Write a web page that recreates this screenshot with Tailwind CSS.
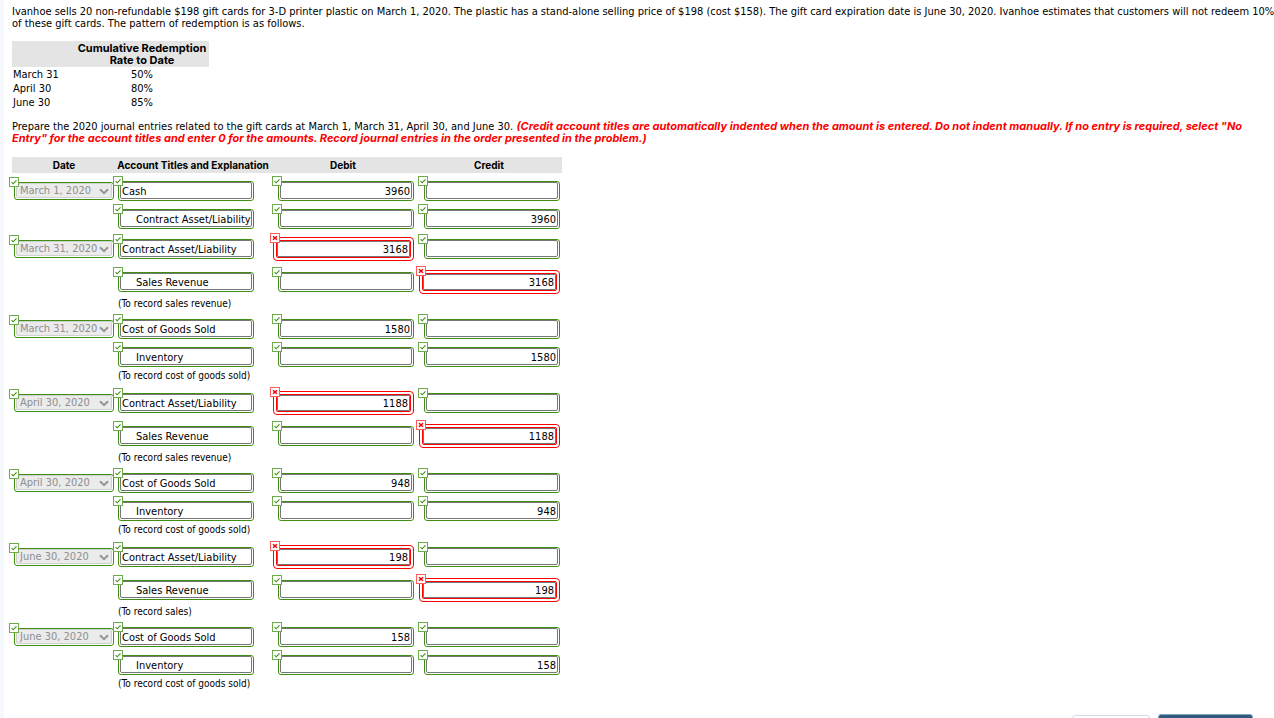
<!DOCTYPE html>
<html lang="en">
<head>
<meta charset="utf-8">
<title>Gift card journal entries</title>
<script src="https://cdn.jsdelivr.net/npm/@tailwindcss/browser@4"></script>
</head>
<body class="min-h-screen overflow-x-hidden bg-white text-black [scrollbar-width:none]">
<svg class="hidden" aria-hidden="true">
  <symbol id="tick" viewBox="0 0 10 10">
    <rect x=".5" y=".5" width="9" height="9" fill="#fff" stroke="#6dac4b"/>
    <path d="M2.6 5.2 4.2 6.8 7.5 3.4" fill="none" stroke="#3f8f12" stroke-width="1.1"/>
  </symbol>
  <symbol id="cross" viewBox="0 0 10 10">
    <rect x=".5" y=".5" width="9" height="9" fill="#fff" stroke="#ff5c5c"/>
    <path d="M3 3.2 7 6.8M7 3.2 3 6.8" fill="none" stroke="#f00000" stroke-width="1.5"/>
  </symbol>
</svg>
<main class="min-h-screen border-l-4 border-[#f5f8fc] pt-[6px] pl-2 font-['DejaVu_Sans_Condensed','DejaVu_Sans',sans-serif] text-[11px] leading-[12px]">
  <p class="whitespace-nowrap">Ivanhoe sells 20 non-refundable $198 gift cards for 3-D printer plastic on March 1, 2020. The plastic has a stand-alone selling price of $198 (cost $158). The gift card expiration date is June 30, 2020. Ivanhoe estimates that customers will not redeem 10%<br>of these gift cards. The pattern of redemption is as follows.</p>

  <table class="mt-[11px] border-collapse">
    <thead>
      <tr class="bg-[#e4e4e4]">
        <th class="w-[63px] p-px"></th>
        <th class="w-[134px] p-px text-center font-['Inter',sans-serif] font-bold">Cumulative Redemption<br>Rate to Date</th>
      </tr>
    </thead>
    <tbody>
      <tr><td class="p-0 pt-[2px] pl-px">March 31</td><td class="p-0 pt-[2px] text-center">50%</td></tr>
      <tr><td class="p-0 pt-[2px] pl-px">April 30</td><td class="p-0 pt-[2px] text-center">80%</td></tr>
      <tr><td class="p-0 pt-[2px] pl-px">June 30</td><td class="p-0 pt-[2px] text-center">85%</td></tr>
    </tbody>
  </table>

  <p class="mt-3 whitespace-nowrap">Prepare the 2020 journal entries related to the gift cards at March 1, March 31, April 30, and June 30. <em class="font-['Inter',sans-serif] leading-[10px] font-bold text-[#f00]">(Credit account titles are automatically indented when the amount is entered. Do not indent manually. If no entry is required, select "No<br>Entry" for the account titles and enter 0 for the amounts. Record journal entries in the order presented in the problem.)</em></p>

  <table class="mt-3 w-[550px] table-fixed border-collapse">
    <thead>
      <tr class="h-4 bg-[#e4e4e4] font-['Inter',sans-serif] text-[10px]">
        <th class="w-[104px] p-0">Date</th>
        <th class="w-[154px] p-0">Account Titles and Explanation</th>
        <th class="w-[146px] p-0">Debit</th>
        <th class="w-[146px] p-0">Credit</th>
      </tr>
      <tr class="h-1"></tr>
    </thead>
    <tbody id="journal"></tbody>
  </table>

  <div class="mt-[19px] flex items-start justify-end gap-2 pr-[21px]">
    <button type="button" aria-label="Save for later" class="mt-px h-8 w-[78px] rounded-[3px] border border-[#d3dde8] bg-white"></button>
    <button type="button" aria-label="Submit answer" class="h-8 w-[95px] rounded-[3px] border border-[#8aa4bd] bg-[#2f5a80]"></button>
  </div>
</main>
<script>
  // Each row: [date, account, indented, debit, credit, wrong side]; a plain string is an explanation line.
  const rows = [
    ['March 1, 2020', 'Cash', false, '3960', '', ''],
    ['', 'Contract Asset/Liability', true, '', '3960', ''],
    ['March 31, 2020', 'Contract Asset/Liability', false, '3168', '', 'debit'],
    ['', 'Sales Revenue', true, '', '3168', 'credit'],
    '(To record sales revenue)',
    ['March 31, 2020', 'Cost of Goods Sold', false, '1580', '', ''],
    ['', 'Inventory', true, '', '1580', ''],
    '(To record cost of goods sold)',
    ['April 30, 2020', 'Contract Asset/Liability', false, '1188', '', 'debit'],
    ['', 'Sales Revenue', true, '', '1188', 'credit'],
    '(To record sales revenue)',
    ['April 30, 2020', 'Cost of Goods Sold', false, '948', '', ''],
    ['', 'Inventory', true, '', '948', ''],
    '(To record cost of goods sold)',
    ['June 30, 2020', 'Contract Asset/Liability', false, '198', '', 'debit'],
    ['', 'Sales Revenue', true, '', '198', 'credit'],
    '(To record sales)',
    ['June 30, 2020', 'Cost of Goods Sold', false, '158', '', ''],
    ['', 'Inventory', true, '', '158', ''],
    '(To record cost of goods sold)',
  ];

  const dateField = (value, n) => `
    <div class="relative ml-0.5 h-[18px] w-[100px] rounded-[3px] border border-[#3f8f12] bg-white p-px pt-0">
      <select disabled aria-label="Date, line ${n}" class="block h-full w-full appearance-none rounded-[2px] border border-[#d0d0d0] bg-[#ebebeb] pl-[3px] leading-[12px] text-[#8e8e8e] opacity-100"><option>${value}</option></select>
      <svg class="pointer-events-none absolute top-[5px] right-[4px] h-[7px] w-[10px]" viewBox="0 0 10 7" fill="none" stroke="#949494" stroke-width="2"><path d="M1 1.2 5 5.2 9 1.2"/></svg>
      <svg class="absolute -top-[6px] -left-[6px] size-[10px]"><use href="#tick"/></svg>
    </div>`;

  const accountField = (value, indented, n) => `
    <div class="relative ml-0.5 h-5 w-[136px] rounded-[3px] border border-[#3f8f12] p-px pt-0">
      <input type="text" aria-label="Account title, line ${n}" value="${value}" class="${indented ? 'pl-[15px]' : 'pl-px'} block h-full w-full rounded-[2px] border border-[#767676] bg-white pt-px leading-[12px]">
      <svg class="absolute -top-[6px] -left-[6px] size-[10px]"><use href="#tick"/></svg>
    </div>`;

  const amountField = (value, wrong, label) => wrong ? `
    <div class="relative mr-0.5 ml-auto h-6 w-[141px] rounded-[4px] border border-[#f00] p-[2px]">
      <div class="h-full rounded-[2px] border border-[#f00]">
        <input type="text" aria-label="${label}" value="${value}" class="block h-full w-full rounded-[1px] border border-[#767676] bg-white pt-px pr-px text-right leading-[12px]">
      </div>
      <svg class="absolute -top-[5px] -left-[4px] size-[10px]"><use href="#cross"/></svg>
    </div>` : `
    <div class="relative mr-0.5 ml-auto h-5 w-[136px] rounded-[3px] border border-[#3f8f12] p-px pt-0">
      <input type="text" aria-label="${label}" value="${value}" class="block h-full w-full rounded-[2px] border border-[#767676] bg-white pt-px pr-px text-right leading-[12px]">
      <svg class="absolute -top-[6px] -left-[7px] size-[10px]"><use href="#tick"/></svg>
    </div>`;

  document.getElementById('journal').innerHTML = rows.map((row, i) => {
    if (typeof row === 'string') {
      return `<tr class="h-4"><td class="p-0"></td><td colspan="3" class="p-0 pl-0.5 pb-[6px] text-[10px] leading-[10px]">${row}</td></tr>`;
    }
    const [date, account, indented, debit, credit, wrong] = row;
    const height = wrong === 'debit' ? 'h-8' : wrong === 'credit' ? 'h-[34px]' : 'h-7';
    return `<tr class="${height}">
      <td class="p-0">${date ? dateField(date, i + 1) : ''}</td>
      <td class="p-0">${accountField(account, indented, i + 1)}</td>
      <td class="p-0">${amountField(debit, wrong === 'debit', 'Debit, line ' + (i + 1))}</td>
      <td class="p-0">${amountField(credit, wrong === 'credit', 'Credit, line ' + (i + 1))}</td>
    </tr>`;
  }).join('');
</script>
</body>
</html>
